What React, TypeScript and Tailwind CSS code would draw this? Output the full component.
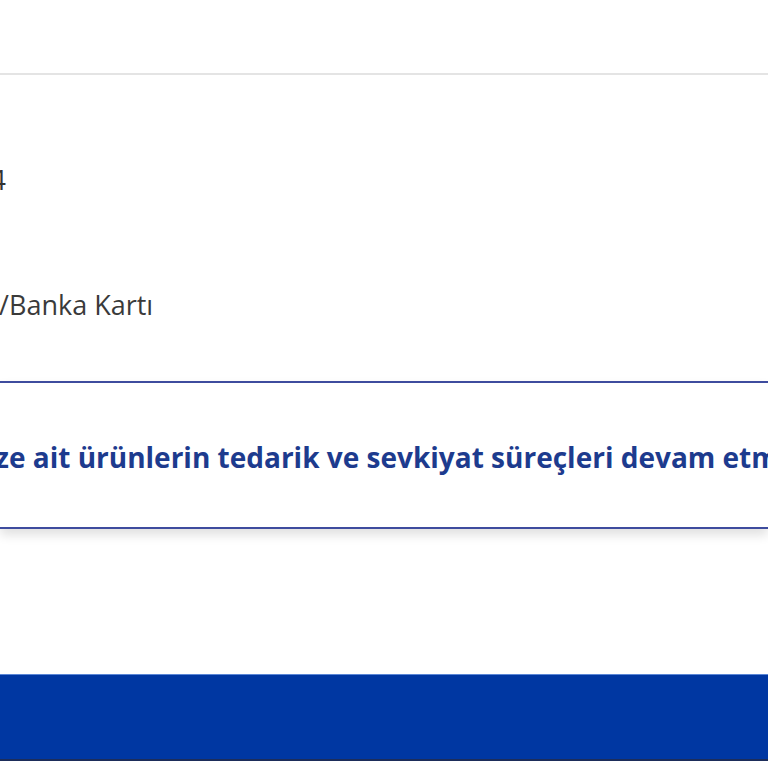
export default function App() {
  return (
    <div className="w-[768px] h-[768px] overflow-hidden bg-white font-['Open_Sans',sans-serif]">
      <div className="h-[73px]" />
      <div className="h-[2px] bg-[#e4e4e4]" />
      <div className="h-[306px] flex flex-col">
        <div className="h-[210px] flex items-center">
          <span className="-ml-[25px] text-[27px] leading-[36px] text-[#333333]">14</span>
        </div>
        <div className="h-[40px] flex items-center">
          <span className="-ml-[67px] text-[27px] leading-[36px] text-[#3a3a3a] whitespace-nowrap">Kredi/Banka Kartı</span>
        </div>
      </div>
      <div className="h-[148px] border-y-2 border-[#3e4c9e] bg-white shadow-[0_6px_10px_rgba(0,0,0,0.12)] flex items-center whitespace-nowrap pt-[3px]">
        <span className="-ml-[134px] text-[28px] leading-[36px] font-bold text-[#1d3b8e]">
          Siparişinize ait ürünlerin tedarik ve sevkiyat süreçleri devam etmektedir.
        </span>
      </div>
      <div className="h-[145px]" />
      <div className="h-[87px] bg-[#0037a2] border-t border-[#5a86d6] border-b-2 border-b-[#1d2d5a]" />
    </div>
  );
}
